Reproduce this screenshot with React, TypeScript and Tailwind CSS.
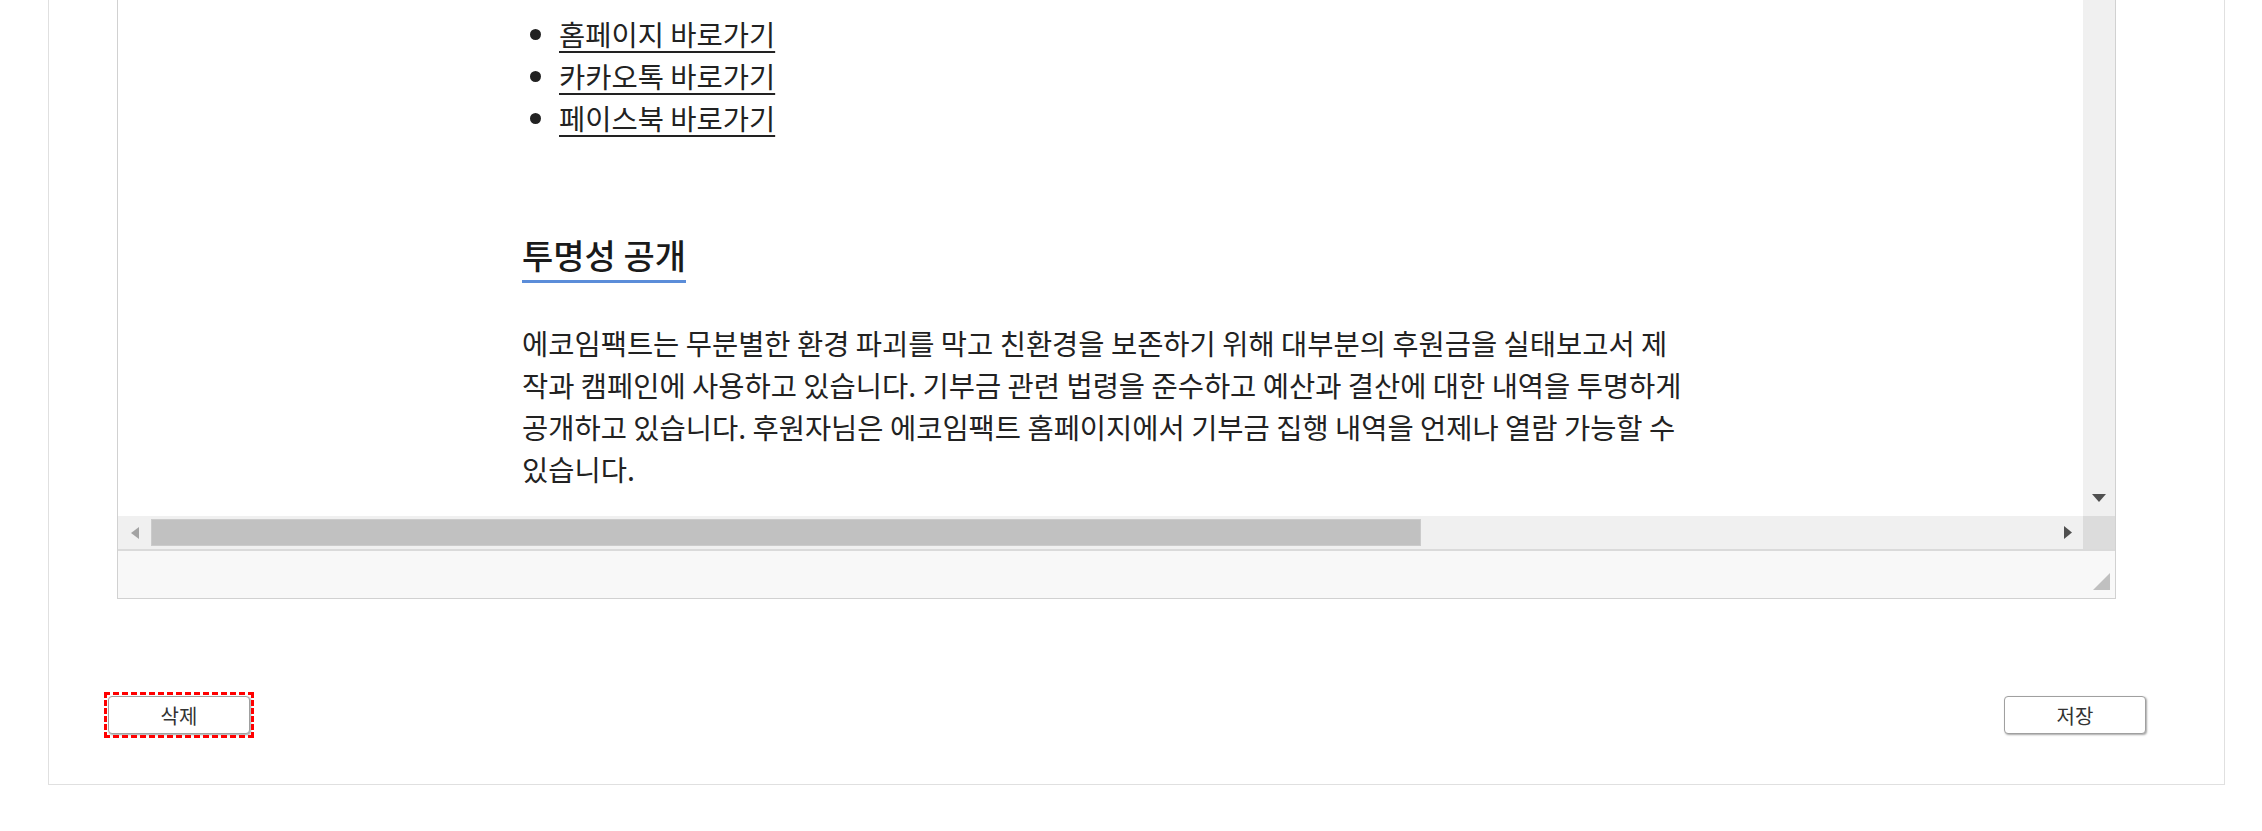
import React from "react";

const links = ["홈페이지 바로가기", "카카오톡 바로가기", "페이스북 바로가기"];

const body =
  "에코임팩트는 무분별한 환경 파괴를 막고 친환경을 보존하기 위해 대부분의 후원금을 실태보고서 제작과 캠페인에 사용하고 있습니다. 기부금 관련 법령을 준수하고 예산과 결산에 대한 내역을 투명하게 공개하고 있습니다. 후원자님은 에코임팩트 홈페이지에서 기부금 집행 내역을 언제나 열람 가능할 수 있습니다.";

function Editor() {
  return (
    <div className="ml-[68px] w-[1999px] border-x border-b border-[#d1d1d1] flex flex-col">
      <div className="flex h-[516px]">
        {/* document area */}
        <div className="flex-1 bg-white overflow-hidden pl-[404px] text-[#222] font-['Noto_Sans_CJK_KR','Noto_Sans',sans-serif]">
          <div className="w-[1170px]">
            <ul className="list-disc pl-[37px] mt-[13px] text-[28.5px] leading-[42px]">
              {links.map((l) => (
                <li key={l}>
                  <a href="#" className="underline underline-offset-[5px] decoration-[1.5px] text-[#222]">
                    {l}
                  </a>
                </li>
              ))}
            </ul>
            <h2 className="inline-block mt-[96px] text-[34px] leading-[40px] font-medium text-[#1a1a1a] pb-[5px] border-b-[3px] border-[#5b8dd9]">
              투명성 공개
            </h2>
            <p className="mt-[39px] text-[28.5px] leading-[42px]">{body}</p>
          </div>
        </div>
        {/* vertical scrollbar */}
        <div className="w-[32px] bg-[#f0f0f0] flex flex-col justify-end items-center pb-[14px]">
          <svg width="14" height="8" viewBox="0 0 14 8">
            <path d="M0 0 L14 0 L7 8 Z" fill="#505050" />
          </svg>
        </div>
      </div>
      {/* horizontal scrollbar */}
      <div className="flex h-[33px]">
        <div className="flex-1 bg-[#f0f0f0] flex items-center">
          <div className="w-[33px] flex justify-center">
            <svg width="8" height="12" viewBox="0 0 8 12">
              <path d="M8 0 L8 12 L0 6 Z" fill="#a3a3a3" />
            </svg>
          </div>
          <div className="w-[1270px] h-[27px] bg-[#c1c1c1] border border-[#cbcbcb]" />
          <div className="flex-1" />
          <div className="w-[30px] flex justify-center">
            <svg width="8" height="13" viewBox="0 0 8 13">
              <path d="M0 0 L8 6.5 L0 13 Z" fill="#505050" />
            </svg>
          </div>
        </div>
        <div className="w-[32px] bg-[#dcdcdc]" />
      </div>
      {/* status bar */}
      <div className="h-[49px] bg-[#f8f8f8] border-t-2 border-[#dadada] flex justify-end items-end pr-[5px] pb-[8px]">
        <svg width="17" height="17" viewBox="0 0 17 17">
          <path d="M17 0 L17 17 L0 17 Z" fill="#c0c0c0" />
        </svg>
      </div>
    </div>
  );
}

function Btn({ label }: { label: string }) {
  return (
    <button className="block w-[142px] h-[38px] pt-[2px] bg-white border border-[#a0a0a0] rounded-[4px] shadow-[1px_1px_2px_rgba(0,0,0,0.35)] text-[20px] text-[#333] font-['Noto_Sans_CJK_KR',sans-serif]">
      {label}
    </button>
  );
}

export default function App() {
  return (
    <div className="w-[2262px] h-[831px] bg-white overflow-hidden">
      <div className="ml-[48px] w-[2177px] h-[785px] border-x border-b border-[#e0e0e0] flex flex-col">
        <Editor />
        <div className="flex justify-between items-start mt-[97px] pl-[59px] pr-[78px]">
          <div className="outline-[3px] outline-dashed outline-[#ff0000] outline-offset-[1px]">
            <Btn label="삭제" />
          </div>
          <Btn label="저장" />
        </div>
      </div>
    </div>
  );
}
